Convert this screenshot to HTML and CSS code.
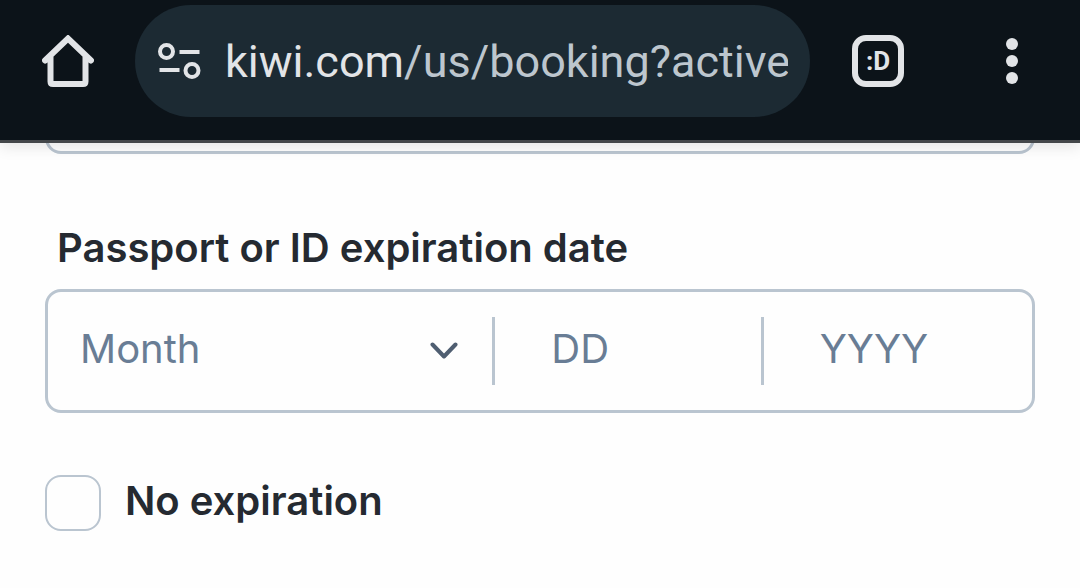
FILE: index.html
```
<!DOCTYPE html>
<html lang="en">

<head>
  <meta charset="UTF-8">
  <meta name="viewport" content="width=device-width, initial-scale=1.0" />
  <title>Kiwi.com - Booking</title>
  <link rel="stylesheet" href="styles.css">
</head>

<body>

  <!-- browser toolbar -->
  <header class="toolbar">
    <button class="icon-btn" type="button" aria-label="Home">
      <svg width="52" height="52" viewBox="0 0 52 52">
        <path d="M3 25.500 L26 3.500 L49 25.500 M8.500 21 V46.500 Q8.500 49 11 49 H41 Q43.500 49 43.500 46.500 V21" />
      </svg>
    </button>

    <div class="address-bar">
      <button class="site-info" type="button" aria-label="Site information">
        <svg width="44" height="38" viewBox="0 0 44 38">
          <circle cx="9.500" cy="9.500" r="6.500" />
          <path d="M22.500 10 H42.500 M2.500 28 H22.500" />
          <circle cx="35" cy="28.500" r="6.500" />
        </svg>
      </button>
      <div class="url" role="textbox" aria-label="Address" contenteditable="true" spellcheck="false">kiwi.com<span class="path">/us/booking?active</span></div>
    </div>

    <button class="tabs-btn" type="button" aria-label="Switch tabs">:D</button>

    <button class="icon-btn menu-btn" type="button" aria-label="More options">
      <svg width="12" height="46" viewBox="0 0 12 46">
        <circle cx="6" cy="6" r="6" />
        <circle cx="6" cy="23" r="6" />
        <circle cx="6" cy="40" r="6" />
      </svg>
    </button>
  </header>

  <form class="form">
    <input class="previous-field" type="text" aria-label="Passport or ID number" />

    <fieldset class="date-group">
      <legend>Passport or ID expiration date</legend>
      <div class="date-field">
        <div class="month">
          <select aria-label="Month">
            <option>Month</option>
            <option>January</option>
            <option>February</option>
            <option>March</option>
            <option>April</option>
            <option>May</option>
            <option>June</option>
            <option>July</option>
            <option>August</option>
            <option>September</option>
            <option>October</option>
            <option>November</option>
            <option>December</option>
          </select>
          <svg class="chevron" width="28" height="18" viewBox="0 0 28 18">
            <path d="M2.500 2.500 L14 14.500 L25.500 2.500" />
          </svg>
        </div>
        <input class="day" type="text" inputmode="numeric" placeholder="DD" aria-label="Day" />
        <input class="year" type="text" inputmode="numeric" placeholder="YYYY" aria-label="Year" />
      </div>
    </fieldset>

    <label class="no-expiration">
      <input type="checkbox" />
      <span>No expiration</span>
    </label>
  </form>

</body>

</html>
```
FILE: styles.css
```
:root {
  --toolbar-bg: #0c1319;
  --address-bg: #1c2a33;
  --toolbar-text: #e2e4e7;
  --path-text: #bdc6ce;
  --border-color: #bac5d0;
  --text-color: #252a31;
  --placeholder-color: #697d95;
  --chevron-color: #4f5e71;
  --font-family: Inter, "Open Sans", sans-serif;
}

* {
  margin: 0;
  padding: 0;
  box-sizing: border-box;
}

body {
  background: #fefefe;
  font-family: var(--font-family);
  font-size: 40px;
  line-height: 48px;
  color: var(--text-color);
  overflow: hidden;
}

button {
  background: none;
  border: none;
  cursor: pointer;
}

svg {
  display: block;
  fill: none;
}

/* toolbar */
.toolbar {
  position: relative;
  display: flex;
  align-items: center;
  padding: 5px 62px 23px 42px;
  background: var(--toolbar-bg);
  border-bottom: 3px solid #44474a;
  box-shadow: 0 4px 14px rgba(0, 0, 0, 0.1);
}

.icon-btn svg {
  stroke: var(--toolbar-text);
  stroke-width: 6;
  stroke-linecap: round;
}

.address-bar {
  flex: 1;
  min-width: 0;
  height: 112px;
  margin: 0 42px 0 41px;
  padding: 0 22px;
  display: flex;
  align-items: center;
  gap: 24px;
  background: var(--address-bg);
  border-radius: 56px;
}

.site-info svg {
  stroke: var(--toolbar-text);
  stroke-width: 4;
}

.url {
  flex: 1;
  min-width: 0;
  padding-top: 2px;
  overflow: hidden;
  white-space: nowrap;
  outline: none;
  font-family: Roboto, sans-serif;
  font-size: 45px;
  line-height: 56px;
  color: var(--toolbar-text);
}

.path {
  color: var(--path-text);
}

.tabs-btn {
  width: 52px;
  height: 52px;
  border: 6px solid var(--toolbar-text);
  border-radius: 14px;
  font-family: Roboto, sans-serif;
  font-size: 26px;
  font-weight: bold;
  line-height: 36px;
  color: var(--toolbar-text);
}

.menu-btn {
  margin-left: 102px;
}

.menu-btn svg {
  fill: var(--toolbar-text);
  stroke: none;
}

/* form */
.form {
  padding: 0 45px;
}

.previous-field {
  display: block;
  width: 100%;
  height: 124px;
  margin-top: -113px;
  border: 3px solid var(--border-color);
  border-radius: 16px;
  background: transparent;
}

.date-group {
  margin-top: 70px;
  border: none;
}

.date-group legend {
  padding: 0 12px;
  margin-bottom: 17px;
  font-weight: 600;
}

.date-field {
  display: grid;
  grid-template-columns: 5fr 3fr 3fr;
  align-items: center;
  height: 124px;
  border: 3px solid var(--border-color);
  border-radius: 16px;
}

.month {
  position: relative;
}

.month,
.day {
  height: 68px;
  border-right: 3px solid var(--border-color);
}

.month select,
.day,
.year {
  width: 100%;
  min-width: 0;
  appearance: none;
  background: transparent;
  font-family: inherit;
  font-size: 40px;
  line-height: 48px;
  color: var(--placeholder-color);
  outline: none;
}

.month select {
  height: 100%;
  padding: 0 72px 4px 32px;
  border: none;
}

.day,
.year {
  height: 68px;
  padding: 0 0 6px 56px;
  border-width: 0;
}

.day {
  border-right-width: 3px;
}

::placeholder {
  color: var(--placeholder-color);
  opacity: 1;
}

.chevron {
  position: absolute;
  top: 25px;
  right: 34px;
  stroke: var(--chevron-color);
  stroke-width: 4;
  stroke-linecap: round;
  stroke-linejoin: round;
  pointer-events: none;
}

.no-expiration {
  display: flex;
  align-items: center;
  gap: 24px;
  margin-top: 62px;
  font-weight: 600;
}

.no-expiration span {
  padding-bottom: 4px;
}

.no-expiration input {
  width: 56px;
  height: 56px;
  appearance: none;
  border: 2px solid var(--border-color);
  border-radius: 16px;
}

.no-expiration input:checked {
  background: var(--chevron-color);
}
```
